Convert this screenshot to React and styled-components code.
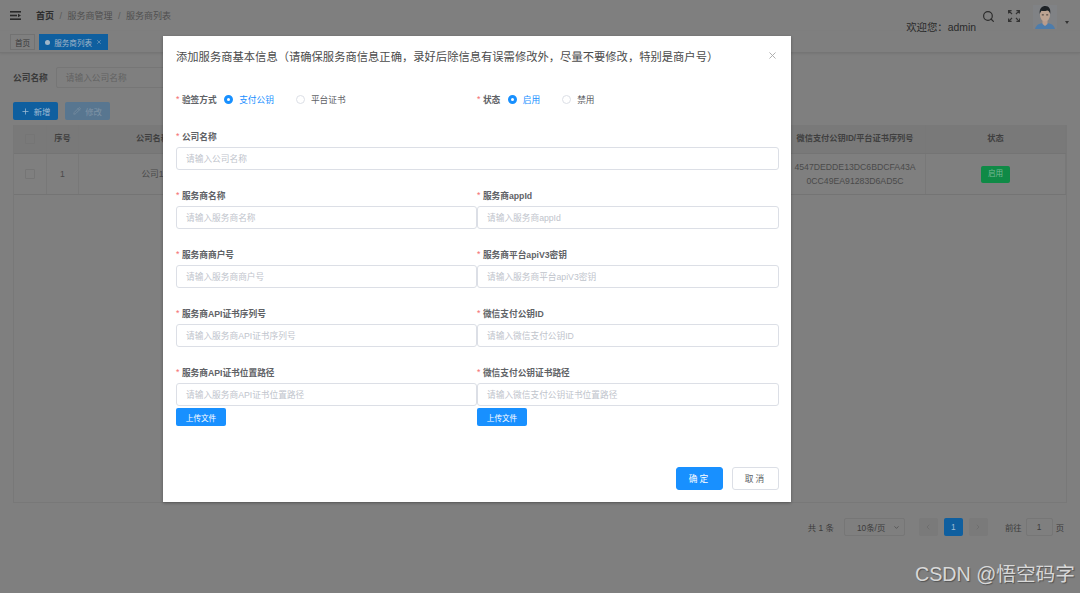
import React from "react";
import styled, { createGlobalStyle } from "styled-components";
import { Search, Plus, Pencil, X, ChevronLeft, ChevronRight, ChevronDown } from "lucide-react";

const GlobalStyle = createGlobalStyle`
  html, body {
    margin: 0;
    padding: 0;
    height: 100%;
    background: #7f7f7f;
    overflow: hidden;
  }
  body {
    font-family: "Liberation Sans", "Noto Sans CJK SC", sans-serif;
  }
  * { box-sizing: border-box; }
`;

const Page = styled.div`
  position: relative;
  width: 1080px;
  height: 593px;
  overflow: hidden;
  background: #7f7f7f;
  color: #333;
`;

const Header = styled.div`
  height: 31px;
  display: flex;
  align-items: center;
  padding: 0 11px 0 10px;
`;

const Breadcrumb = styled.div`
  display: flex;
  align-items: center;
  gap: 5.5px;
  margin-left: 15px;
  font-size: 9px;
  color: #4f4f4f;
`;

const Crumb = styled.span`
  color: ${(p) => (p.$first ? "#2e2e2e" : "#4f4f4f")};
  font-weight: ${(p) => (p.$first ? 700 : 400)};
`;

const Sep = styled.span`
  color: #5a5a5a;
`;

const HeaderRight = styled.div`
  margin-left: auto;
  display: flex;
  align-items: flex-start;
  height: 31px;
  padding-top: 5px;
  color: #2c2c2c;
`;

const Welcome = styled.span`
  font-size: 10.4px;
  margin: 14px 6px 0 0;
  color: #2a2a2a;
`;

const IconSlot = styled.span`
  display: flex;
  margin: 5px ${(p) => p.$gap}px 0 0;
`;

const Caret = styled.span`
  width: 0;
  height: 0;
  margin: 16px 0 0 8px;
  border-left: 2px solid transparent;
  border-right: 2px solid transparent;
  border-top: 3px solid #333;
`;

const TagBar = styled.div`
  height: 22px;
  display: flex;
  align-items: flex-start;
  gap: 4px;
  padding: 3px 0 0 10px;
  border-bottom: 1px solid #757575;
  box-shadow: 0 1px 2px rgba(0, 0, 0, 0.08);
`;

const Tag = styled.div`
  height: 16px;
  padding: 0 ${(p) => (p.$active ? 5 : 4)}px;
  display: flex;
  align-items: center;
  gap: 4px;
  font-size: 7.6px;
  border: 1px solid ${(p) => (p.$active ? "#0f5f9f" : "#727272")};
  background: ${(p) => (p.$active ? "#0f5f9f" : "#7f7f7f")};
  color: ${(p) => (p.$active ? "#a0b6c9" : "#3a3a3a")};
`;

const TagDot = styled.i`
  width: 5px;
  height: 5px;
  border-radius: 50%;
  background: #a0b6c9;
`;

const Content = styled.div`
  padding: 13px 13px 0;
`;

const FilterRow = styled.div`
  display: flex;
  align-items: center;
  height: 22px;
  gap: 8px;
`;

const FilterLabel = styled.span`
  font-size: 8.7px;
  font-weight: 700;
  color: #3a3a3a;
`;

const FilterInput = styled.div`
  width: 200px;
  height: 21px;
  padding-left: 9px;
  display: flex;
  align-items: center;
  font-size: 8.7px;
  color: #626262;
  border: 1px solid #767676;
  border-radius: 2px;
`;

const Actions = styled.div`
  display: flex;
  gap: 7px;
  margin-top: 14px;
`;

const ActionButton = styled.div`
  width: 45px;
  height: 18px;
  display: flex;
  align-items: center;
  justify-content: center;
  gap: 4px;
  font-size: 8.4px;
  border-radius: 2px;
  background: ${(p) => (p.$muted ? "#587690" : "#0f5f9f")};
  color: ${(p) => (p.$muted ? "#7f93a5" : "#a0bcd4")};
`;

const TableWrap = styled.div`
  margin-top: 5px;
  height: 378px;
  border: 1px solid #787878;
  border-top: 0;
`;

const columns = "33px 32px 148px 1fr 141px 140px";

const HeadRow = styled.div`
  display: grid;
  grid-template-columns: ${columns};
  height: 29px;
  background: #797979;
  border-bottom: 1px solid #747474;
  font-size: 8.2px;
  font-weight: 700;
  color: #3f3f3f;
`;

const BodyRow = styled.div`
  display: grid;
  grid-template-columns: ${columns};
  height: 41px;
  border-bottom: 1px solid #747474;
  font-size: 8.7px;
  color: #4a4a4a;
`;

const Cell = styled.div`
  display: flex;
  align-items: center;
  justify-content: center;
  text-align: center;
  line-height: 14px;
  border-right: 1px solid #787878;
`;

const CheckBox = styled.i`
  width: 10px;
  height: 10px;
  border: 1px solid #757575;
  border-radius: 1px;
`;

const StatusTag = styled.span`
  width: 29px;
  height: 17px;
  display: flex;
  align-items: center;
  justify-content: center;
  border-radius: 2px;
  font-size: 7.6px;
  background: #0f8a46;
  color: #78b896;
`;

const Pagination = styled.div`
  position: absolute;
  right: 16px;
  top: 518px;
  height: 18px;
  display: flex;
  align-items: center;
  font-size: 8.4px;
  color: #3c3c3c;
`;

const PageSize = styled.div`
  width: 61px;
  height: 18px;
  margin: 0 14px 0 10px;
  padding: 0 4px 0 12px;
  display: flex;
  align-items: center;
  justify-content: space-between;
  border: 1px solid #767676;
  border-radius: 2px;
`;

const PageButton = styled.div`
  width: 19px;
  height: 18px;
  margin-right: ${(p) => p.$mr || 0}px;
  display: flex;
  align-items: center;
  justify-content: center;
  border-radius: 2px;
  background: ${(p) => (p.$active ? "#0f5f9f" : "#7a7a7a")};
  color: ${(p) => (p.$active ? "#a0bcd4" : "#686868")};
`;

const JumpInput = styled.div`
  width: 27px;
  height: 18px;
  margin: 0 3px 0 4px;
  display: flex;
  align-items: center;
  justify-content: center;
  border: 1px solid #767676;
  border-radius: 2px;
`;

const Overlay = styled.div`
  position: absolute;
  inset: 0;
  padding: 36px 0 0 163px;
`;

const Dialog = styled.div`
  width: 628px;
  height: 466px;
  padding: 0 12px 0 13px;
  display: flex;
  flex-direction: column;
  background: #fff;
  box-shadow: 0 1px 3px rgba(0, 0, 0, 0.3);
`;

const DialogHead = styled.div`
  height: 39px;
  display: flex;
  align-items: center;
  justify-content: space-between;
  padding-right: 1px;
  font-size: 11.3px;
  color: #4b4b4b;
`;

const Close = styled.span`
  display: flex;
  color: #a8a8a8;
`;

const RadioRows = styled.div`
  display: grid;
  grid-template-columns: 301px 302px;
  height: 18px;
  margin-top: 15px;
`;

const RadioField = styled.div`
  display: flex;
  align-items: center;
  font-size: 8.7px;
  font-weight: 700;
  color: #606266;
`;

const Star = styled.span`
  color: #f56c6c;
  margin-right: 2.500px;
  font-weight: 400;
`;

const RadioGroup = styled.div`
  display: flex;
  align-items: center;
  margin-left: 7.500px;
`;

const RadioItem = styled.div`
  display: flex;
  align-items: center;
  gap: 6px;
  margin-right: 22px;
  font-weight: 400;
  color: ${(p) => (p.$checked ? "#1890ff" : "#606266")};
`;

const RadioMark = styled.i`
  width: 9px;
  height: 9px;
  border-radius: 50%;
  border: ${(p) => (p.$checked ? "3px solid #1890ff" : "1px solid #dcdfe6")};
  background: #fff;
`;

const FormGrid = styled.div`
  display: grid;
  grid-template-columns: 301px 302px;
  margin-top: 19px;
  row-gap: 14px;
`;

const Field = styled.div`
  grid-column: ${(p) => (p.$wide ? "1 / span 2" : "auto")};
  min-height: 45px;
`;

const FieldLabel = styled.div`
  height: 20px;
  padding-bottom: 2px;
  display: flex;
  align-items: center;
  font-size: 8.7px;
  font-weight: 700;
  color: #606266;
`;

const InputBox = styled.div`
  height: 23px;
  padding-left: 9px;
  display: flex;
  align-items: center;
  font-size: 8.7px;
  color: #c0c4cc;
  border: 1px solid #dcdfe6;
  border-radius: 3px;
  background: #fff;
`;

const UploadButton = styled.div`
  width: 50px;
  height: 18px;
  margin-top: 2px;
  display: flex;
  align-items: center;
  justify-content: center;
  font-size: 7.6px;
  color: #fff;
  background: #1890ff;
  border-radius: 2px;
`;

const Footer = styled.div`
  margin-top: auto;
  margin-bottom: 12px;
  display: flex;
  justify-content: flex-end;
  gap: 9px;
`;

const FooterButton = styled.div`
  width: 47px;
  height: 23px;
  display: flex;
  align-items: center;
  justify-content: center;
  letter-spacing: 2px;
  font-size: 8.7px;
  border-radius: 3px;
  color: ${(p) => (p.$primary ? "#fff" : "#606266")};
  background: ${(p) => (p.$primary ? "#1890ff" : "#fff")};
  border: 1px solid ${(p) => (p.$primary ? "#1890ff" : "#dcdfe6")};
`;

const Watermark = styled.div`
  position: absolute;
  right: 5px;
  bottom: 6px;
  font-size: 19.7px;
  color: #d8d8d8;
  text-shadow: 1px 1px 1px rgba(0, 0, 0, 0.35);
`;

const MenuIcon = () => (
  <svg width="11" height="9" viewBox="0 0 11 9" fill="#2a2a2a">
    <rect x="0" y="0" width="11" height="1.6" />
    <rect x="0" y="3.7" width="7" height="1.6" />
    <rect x="0" y="7.400" width="11" height="1.6" />
    <path d="M8 2.700 11 4.500 8 6.300z" />
  </svg>
);

const FullscreenIcon = () => (
  <svg width="12" height="12" viewBox="0 0 12 12" fill="none" stroke="#333" strokeWidth="1.2">
    <path d="M0.6 3.6V0.6H3.6M0.6 0.6 4 4" />
    <path d="M11.4 3.6V0.6H8.4M11.4 0.6 8 4" />
    <path d="M0.6 8.4V11.4H3.6M0.6 11.4 4 8" />
    <path d="M11.4 8.4V11.4H8.4M11.4 11.4 8 8" />
  </svg>
);

const Avatar = () => (
  <svg width="24" height="24" viewBox="0 0 24 24">
    <rect width="24" height="24" fill="#808285" />
    <path d="M2 24c1-4.500 5-6 10-6s9 1.500 10 6z" fill="#4d7cab" />
    <path d="M9.500 15h5v4l-2.500 2-2.500-2z" fill="#b89c8c" />
    <ellipse cx="12" cy="10" rx="5" ry="6.500" fill="#bda392" />
    <path d="M6.800 9C6 3.500 9 1 12.500 1S18 4 17.200 9c-.5-2-1.500-3.500-3-3.500-2 .7-4.500.7-5.500.3C7.800 6.500 7.200 7.500 6.800 9z" fill="#1d2226" />
    <rect x="8.800" y="9.500" width="2" height=".8" fill="#222" />
    <rect x="13.200" y="9.500" width="2" height=".8" fill="#222" />
  </svg>
);

const FormField = ({ label, placeholder, upload, wide }) => (
  <Field $wide={wide}>
    <FieldLabel>
      <Star>*</Star>
      {label}
    </FieldLabel>
    <InputBox>{placeholder}</InputBox>
    {upload && <UploadButton>上传文件</UploadButton>}
  </Field>
);

const Radios = ({ label, options }) => (
  <RadioField>
    <Star>*</Star>
    {label}
    <RadioGroup>
      {options.map((o, i) => (
        <RadioItem key={o} $checked={i === 0}>
          <RadioMark $checked={i === 0} />
          {o}
        </RadioItem>
      ))}
    </RadioGroup>
  </RadioField>
);

export default function App() {
  return (
    <Page>
      <GlobalStyle />
      <Header>
        <MenuIcon />
        <Breadcrumb>
          <Crumb $first>首页</Crumb>
          <Sep>/</Sep>
          <Crumb>服务商管理</Crumb>
          <Sep>/</Sep>
          <Crumb>服务商列表</Crumb>
        </Breadcrumb>
        <HeaderRight>
          <Welcome>欢迎您：admin</Welcome>
          <IconSlot $gap={13}>
            <Search size={13} strokeWidth={2.2} />
          </IconSlot>
          <IconSlot $gap={13}>
            <FullscreenIcon />
          </IconSlot>
          <Avatar />
          <Caret />
        </HeaderRight>
      </Header>
      <TagBar>
        <Tag>首页</Tag>
        <Tag $active>
          <TagDot />
          服务商列表
          <X size={6} />
        </Tag>
      </TagBar>
      <Content>
        <FilterRow>
          <FilterLabel>公司名称</FilterLabel>
          <FilterInput>请输入公司名称</FilterInput>
        </FilterRow>
        <Actions>
          <ActionButton>
            <Plus size={9} />
            新增
          </ActionButton>
          <ActionButton $muted>
            <Pencil size={8} />
            修改
          </ActionButton>
        </Actions>
        <TableWrap>
          <HeadRow>
            <Cell>
              <CheckBox />
            </Cell>
            <Cell>序号</Cell>
            <Cell>公司名称</Cell>
            <Cell />
            <Cell>微信支付公钥ID/平台证书序列号</Cell>
            <Cell>状态</Cell>
          </HeadRow>
          <BodyRow>
            <Cell>
              <CheckBox />
            </Cell>
            <Cell>1</Cell>
            <Cell>公司1</Cell>
            <Cell />
            <Cell>
              4547DEDDE13DC6BDCFA43A
              <br />
              0CC49EA91283D6AD5C
            </Cell>
            <Cell>
              <StatusTag>启用</StatusTag>
            </Cell>
          </BodyRow>
        </TableWrap>
      </Content>
      <Pagination>
        共 1 条
        <PageSize>
          10条/页
          <ChevronDown size={7} />
        </PageSize>
        <PageButton $mr={6}>
          <ChevronLeft size={8} />
        </PageButton>
        <PageButton $active $mr={6}>1</PageButton>
        <PageButton $mr={17}>
          <ChevronRight size={8} />
        </PageButton>
        前往
        <JumpInput>1</JumpInput>
        页
      </Pagination>
      <Overlay>
        <Dialog>
          <DialogHead>
            添加服务商基本信息（请确保服务商信息正确，录好后除信息有误需修改外，尽量不要修改，特别是商户号）
            <Close>
              <X size={11} />
            </Close>
          </DialogHead>
          <RadioRows>
            <Radios label="验签方式" options={["支付公钥", "平台证书"]} />
            <Radios label="状态" options={["启用", "禁用"]} />
          </RadioRows>
          <FormGrid>
            <FormField wide label="公司名称" placeholder="请输入公司名称" />
            <FormField label="服务商名称" placeholder="请输入服务商名称" />
            <FormField label="服务商appId" placeholder="请输入服务商appId" />
            <FormField label="服务商商户号" placeholder="请输入服务商商户号" />
            <FormField label="服务商平台apiV3密钥" placeholder="请输入服务商平台apiV3密钥" />
            <FormField label="服务商API证书序列号" placeholder="请输入服务商API证书序列号" />
            <FormField label="微信支付公钥ID" placeholder="请输入微信支付公钥ID" />
            <FormField upload label="服务商API证书位置路径" placeholder="请输入服务商API证书位置路径" />
            <FormField upload label="微信支付公钥证书路径" placeholder="请输入微信支付公钥证书位置路径" />
          </FormGrid>
          <Footer>
            <FooterButton $primary>确定</FooterButton>
            <FooterButton>取消</FooterButton>
          </Footer>
        </Dialog>
      </Overlay>
      <Watermark>CSDN @悟空码字</Watermark>
    </Page>
  );
}
